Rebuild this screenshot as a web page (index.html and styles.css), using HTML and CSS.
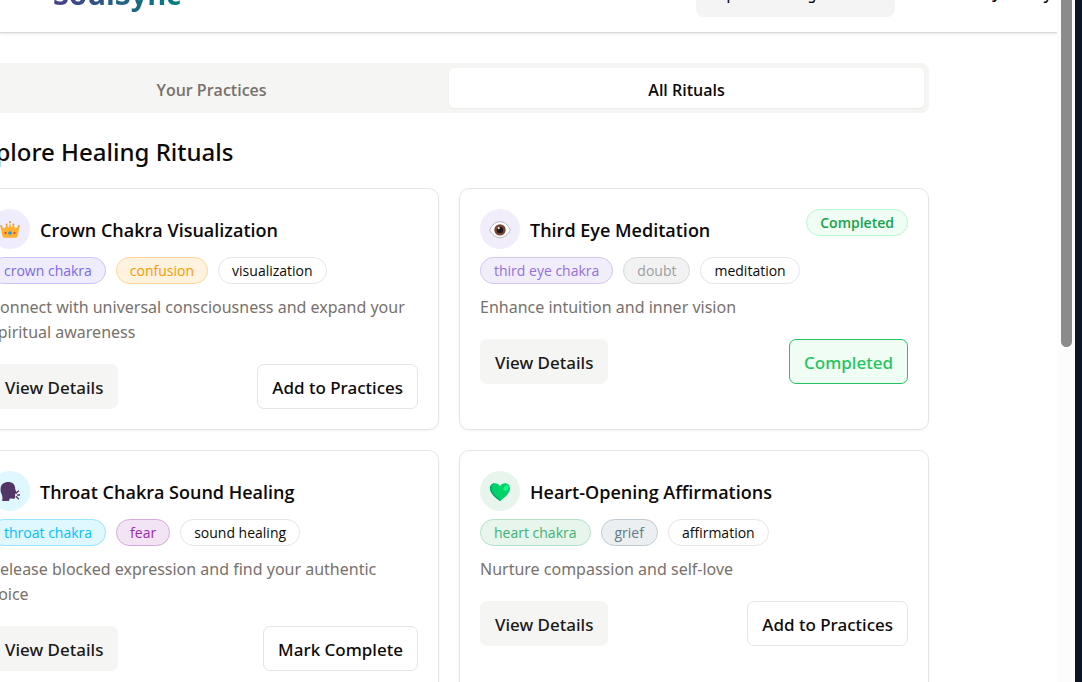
FILE: index.html
```html
<!DOCTYPE html>
<html lang="en">
<head>
<meta charset="utf-8">
<title>SoulSync – Healing Rituals</title>
<link rel="stylesheet" href="styles.css">
</head>
<body>
<div class="frame">
  <div class="page">
    <header class="topbar">
      <nav class="nav">
        <a class="brand" href="#">SoulSync</a>
        <span class="status">Logged in</span>
        <a class="menu" href="#">Explore Healing</a>
        <a class="journey" href="#">Journey</a>
      </nav>
    </header>
    <main class="content">
      <div class="tabs" role="tablist">
        <button class="tab" type="button" role="tab" aria-selected="false">Your Practices</button>
        <button class="tab tab-active" type="button" role="tab" aria-selected="true">All Rituals</button>
      </div>
      <h2 class="heading">Explore Healing Rituals</h2>
      <div class="cards">
        <article class="card crown">
          <div class="card-head">
            <span class="icon">
              <svg width="20" height="20" viewBox="0 0 20 20" aria-hidden="true">
                <path d="M.4 7 5 9.500 6.600 5.500 9 9 10 3l1 6 2.400-3.500L15 9.500 19.600 7 17.600 17q-.3 1.700-1.800 1.700H4.200Q2.700 18.700 2.400 17z" fill="#ffb02e"/>
                <g fill="#e39a3b"><circle cx="1.200" cy="7" r="1"/><circle cx="6.600" cy="5.500" r="1"/><circle cx="10" cy="3" r="1.100"/><circle cx="13.400" cy="5.500" r="1"/><circle cx="18.800" cy="7" r="1"/></g>
                <path d="M5 9.500 6.600 6 9 10l1-6 1 6 2.400-4L15 9.500v3H5z" fill="#ffb02e"/>
                <circle cx="10" cy="14" r="1.800" fill="#00a6ed"/><circle cx="5.600" cy="14" r="1.100" fill="#f8312f"/><circle cx="14.400" cy="14" r="1.100" fill="#f8312f"/>
              </svg>
            </span>
            <h3 class="title">Crown Chakra Visualization</h3>
          </div>
          <div class="tags"><span class="tag tag-chakra">crown chakra</span><span class="tag confusion">confusion</span><span class="tag">visualization</span></div>
          <p class="desc">Connect with universal consciousness and expand your spiritual awareness</p>
          <div class="actions"><button class="btn btn-soft" type="button">View Details</button><button class="btn" type="button">Add to Practices</button></div>
        </article>

        <article class="card eye">
          <div class="card-head">
            <span class="icon">
              <svg width="22" height="20" viewBox="0 0 22 20" aria-hidden="true">
                <path d="M.6 11C3 5.500 7 2.700 11 2.700s8 2.800 10.400 8.300C19 16 15 18.700 11 18.700S3 16 .6 11z" fill="#fff" stroke="#b8b5bd"/>
                <circle cx="11" cy="10.900" r="5.700" fill="#7d4533"/><circle cx="11" cy="10.900" r="3.200" fill="#1c1c1c"/><circle cx="9.700" cy="9.100" r="1.100" fill="#fff"/>
              </svg>
            </span>
            <h3 class="title">Third Eye Meditation</h3>
            <span class="badge">Completed</span>
          </div>
          <div class="tags"><span class="tag tag-chakra">third eye chakra</span><span class="tag doubt">doubt</span><span class="tag">meditation</span></div>
          <p class="desc">Enhance intuition and inner vision</p>
          <div class="actions"><button class="btn btn-soft" type="button">View Details</button><button class="btn btn-done" type="button">Completed</button></div>
        </article>

        <article class="card throat">
          <div class="card-head">
            <span class="icon">
              <svg width="20" height="20" viewBox="0 0 20 20" aria-hidden="true">
                <path d="M2.200 20C2.700 17.500 2.500 15.500 1.800 13.500.8 11.300.4 9.300.6 7.400 1 3.200 4.200 1.100 8.200 1.100c4 0 6.500 2.200 6.900 5.400.1 1 0 1.800.4 2.600l1.200 2.400c.2.500 0 .9-.6 1l-1 .2.100 3.600c0 1-.6 1.500-1.500 1.400l-2.900-.3c-1 0-1.400.5-1.500 1.400L9 20z" fill="#533566"/>
                <path d="m16.300 12 2.200-2M17.500 14h2.300M16.400 15.800l2 1.900" fill="none" stroke="#533566" stroke-width="1.300" stroke-linecap="round"/>
              </svg>
            </span>
            <h3 class="title">Throat Chakra Sound Healing</h3>
          </div>
          <div class="tags"><span class="tag tag-chakra">throat chakra</span><span class="tag fear">fear</span><span class="tag">sound healing</span></div>
          <p class="desc">Release blocked expression and find your authentic voice</p>
          <div class="actions"><button class="btn btn-soft" type="button">View Details</button><button class="btn" type="button">Mark Complete</button></div>
        </article>

        <article class="card heart">
          <div class="card-head">
            <span class="icon">
              <svg width="22" height="20" viewBox="0 0 22 20" aria-hidden="true">
                <path d="M11 5.200C9.800 3 7.900 2.300 6 2.300 3 2.300 1 4.500 1 7.400c0 5 5.800 9.200 10 12.600 4.200-3.400 10-7.600 10-12.600 0-2.900-2-5.100-5-5.100-1.900 0-3.800.7-5 2.900z" fill="#00d26a"/>
                <path d="M6 2.300C3 2.300 1 4.500 1 7.400c0 5 5.800 9.200 10 12.600l.8-.8C7 15.500 2.400 11.500 2.400 7c0-2.300 1.300-4 3.600-4.700z" fill="#00a66b"/>
                <ellipse cx="17" cy="7" rx="2.200" ry="3.200" transform="rotate(35 17 7)" fill="#19f58f"/>
              </svg>
            </span>
            <h3 class="title">Heart-Opening Affirmations</h3>
          </div>
          <div class="tags"><span class="tag tag-chakra">heart chakra</span><span class="tag grief">grief</span><span class="tag">affirmation</span></div>
          <p class="desc">Nurture compassion and self-love</p>
          <div class="actions"><button class="btn btn-soft" type="button">View Details</button><button class="btn" type="button">Add to Practices</button></div>
        </article>
      </div>
    </main>
  </div>
  <div class="scrollbar" aria-hidden="true"><div class="thumb"></div></div>
  <div class="edge"></div>
</div>
</body>
</html>
```
FILE: styles.css
```css
* { box-sizing: border-box; }

body {
  margin: 0;
  color: #0c0a09;
  background: #fff;
  font-family: "Noto Sans", "Open Sans", sans-serif;
  font-size: 16px;
}

a { color: inherit; text-decoration: none; }

.frame {
  display: flex;
  height: 100vh;
  overflow: hidden;
}

.page {
  flex: 1;
  min-width: 0;
  overflow: hidden;
}

.topbar {
  height: 33px;
  overflow: hidden;
  border-bottom: 1px solid #d9d9d9;
  box-shadow: 0 1px 3px #0000001a;
}

.nav {
  display: flex;
  align-items: flex-start;
  height: 60px;
  margin-top: -43px;
  padding: 0 5px 0 53px;
}

.brand {
  padding-top: 17px;
  font-family: "Open Sans", sans-serif;
  font-size: 29px;
  font-weight: 700;
  line-height: 40px;
  color: transparent;
  background: linear-gradient(90deg, #483d8b, #008080);
  background-clip: text;
}

.status {
  margin-left: 8px;
  padding-top: 24px;
  font-size: 14px;
  line-height: 20px;
  color: #78716c;
}

.menu {
  width: 199px;
  height: 60px;
  margin-left: auto;
  padding: 28px 15px 0;
  border-radius: 8px;
  background: #f4f4f4;
  font-size: 14px;
  font-weight: 500;
  line-height: 20px;
}

.journey {
  width: 157px;
  padding-top: 26px;
  text-align: right;
  font-weight: 500;
  line-height: 20px;
}

.content {
  padding: 30px 128px 0 0;
  margin-left: -31px;
}

.tabs {
  display: grid;
  grid-template-columns: 1fr 1fr;
  height: 50px;
  padding: 5px;
  border-radius: 8px;
  background: #f5f5f4;
}

.tab {
  padding: 3px 0 0;
  border: 0;
  border-radius: 5px;
  background: none;
  color: #78716c;
  font: 600 16px "Open Sans", "Noto Sans", sans-serif;
}

.tab-active {
  background: #fff;
  color: #0c0a09;
  box-shadow: 0 1px 2px #0000000d;
}

.heading {
  margin: 21px 0 19px;
  font-size: 24px;
  font-weight: 500;
  line-height: 35px;
}

.cards {
  display: grid;
  grid-template-columns: 1fr 1fr;
  gap: 20px;
}

.card {
  padding: 20px;
  border: 1px solid #e5e5e5;
  border-radius: 10px;
  box-shadow: 0 1px 2px #0000000d;
}

.card-head {
  display: flex;
  align-items: center;
  gap: 10px;
  height: 40px;
}

.icon {
  display: grid;
  place-items: center;
  width: 40px;
  height: 40px;
  border-radius: 50%;
  background: var(--tint);
}

.title {
  margin: 0;
  padding-top: 2px;
  font-family: "Open Sans", "Noto Sans", sans-serif;
  font-size: 18px;
  font-weight: 600;
}

.badge {
  align-self: flex-start;
  margin-left: auto;
  padding: 0 13px;
  border: 1px solid #bbf7d0;
  border-radius: 14px;
  background: #f0fdf4;
  color: #16a34a;
  font-family: "Open Sans", "Noto Sans", sans-serif;
  font-size: 14px;
  font-weight: 600;
  line-height: 25px;
}

.tags {
  display: flex;
  gap: 10px;
  margin-top: 8px;
}

.tag {
  padding: 0 13px;
  border: 1px solid #e5e5e5;
  border-radius: 14px;
  font-family: "Open Sans", "Noto Sans", sans-serif;
  font-size: 14px;
  line-height: 25px;
}

.tag-chakra {
  border-color: var(--line);
  background: var(--tint);
  color: var(--ink);
}

.crown { --ink: #7b68ee; --tint: #efedfd; --line: #cac3f8; }
.eye { --ink: #9370db; --tint: #f1edfb; --line: #d4c6f1; }
.throat { --ink: #00bfff; --tint: #dff7ff; --line: #99e5ff; }
.heart { --ink: #3cb371; --tint: #e7f5ed; --line: #b1e1c6; }

.confusion { border-color: #ffd699; background: #fff2df; color: #ff9800; }
.doubt { border-color: #d8d8d8; background: #f2f2f2; color: #9e9e9e; }
.fear { border-color: #d7a8df; background: #f3e4f5; color: #9c27b0; }
.grief { border-color: #bfcbd1; background: #ebeff1; color: #607d8b; }

.desc {
  margin: 11px 0 19px;
  color: #78716c;
  line-height: 25px;
}

.actions {
  display: flex;
  justify-content: space-between;
}

.btn {
  height: 45px;
  padding: 1px 14px 0;
  border: 1px solid #e5e5e5;
  border-radius: 7px;
  background: #fff;
  color: #0c0a09;
  font: 500 17px "Noto Sans", "Open Sans", sans-serif;
}

.btn-soft {
  border-color: #f5f5f4;
  background: #f5f5f4;
  color: #1c1917;
}

.btn-done {
  border-color: #22c55e;
  background: #f0fdf4;
  color: #22c55e;
}

.scrollbar {
  width: 18px;
  padding: 0 3px 0 4px;
  background: #fcfcfc;
}

.thumb {
  height: 347px;
  border-radius: 0 0 6px 6px;
  background: #8b8b8b;
}

.edge {
  width: 7px;
  background: #0d1424;
}
```
